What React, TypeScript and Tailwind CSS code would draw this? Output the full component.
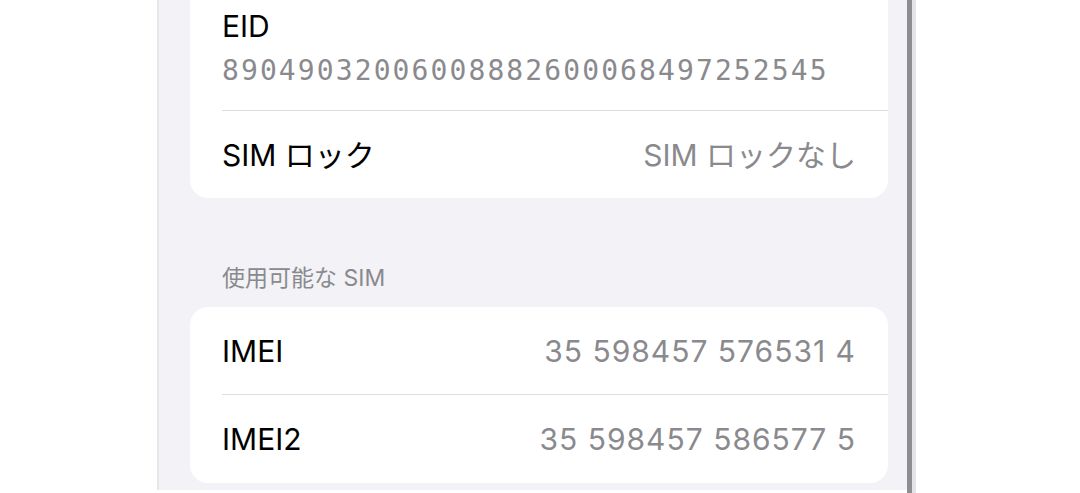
import React from "react";

const sans = "font-['Inter','Noto_Sans_CJK_JP',sans-serif]";

function Row({ label, value, h }: { label: string; value: string; h: string }) {
  return (
    <div className={`flex ${h} items-center justify-between pl-[32px] pr-[32px]`}>
      <span className="text-[30px] leading-[36px] text-black">{label}</span>
      <span className="text-[30px] leading-[36px] tracking-[1px] text-[#8a8a8e]">{value}</span>
    </div>
  );
}

export default function App() {
  return (
    <div className={`flex h-[493px] w-[1080px] overflow-hidden bg-white ${sans}`}>
      <div className="w-[157px] shrink-0 bg-white" />
      <div className="h-[490px] w-[2px] shrink-0 bg-[#e6e6eb]" />
      <div className="flex h-[490px] w-[748px] shrink-0 flex-col bg-[#f2f2f7] pl-[31px] pr-[19px]">
        {/* Card 1 */}
        <div className="rounded-b-[18px] bg-white">
          <div className="pl-[32px] pt-[8px] pb-[22px]">
            <div className="text-[30px] leading-[36px] text-black">EID</div>
            <div className="mt-[10px] font-['DejaVu_Sans_Mono',monospace] text-[28px] leading-[34px] tracking-[2.1px] text-[#8a8a8e]">
              89049032006008882600068497252545
            </div>
          </div>
          <div className="ml-[32px] h-px bg-[#dedee2]" />
          <div className="flex h-[87px] items-center justify-between pl-[32px] pr-[32px]">
            <span className="text-[30px] leading-[36px] text-black">SIM ロック</span>
            <span className="text-[30px] leading-[36px] text-[#8a8a8e]">SIM ロックなし</span>
          </div>
        </div>

        {/* Section header */}
        <div className="mt-[66px] mb-[15px] pl-[32px] text-[23px] leading-[28px] text-[#8a8a8e]">
          使用可能な SIM
        </div>

        {/* Card 2 */}
        <div className="rounded-[18px] bg-white">
          <Row label="IMEI" value="35 598457 576531 4" h="h-[87px]" />
          <div className="ml-[32px] h-px bg-[#dedee2]" />
          <Row label="IMEI2" value="35 598457 586577 5" h="h-[88px]" />
        </div>
      </div>
      <div className="h-[493px] w-[5px] shrink-0 bg-[#8d8d92]" />
      <div className="h-[493px] w-[4px] shrink-0 bg-[#e4e4e8]" />
      <div className="flex-1 bg-white" />
    </div>
  );
}
